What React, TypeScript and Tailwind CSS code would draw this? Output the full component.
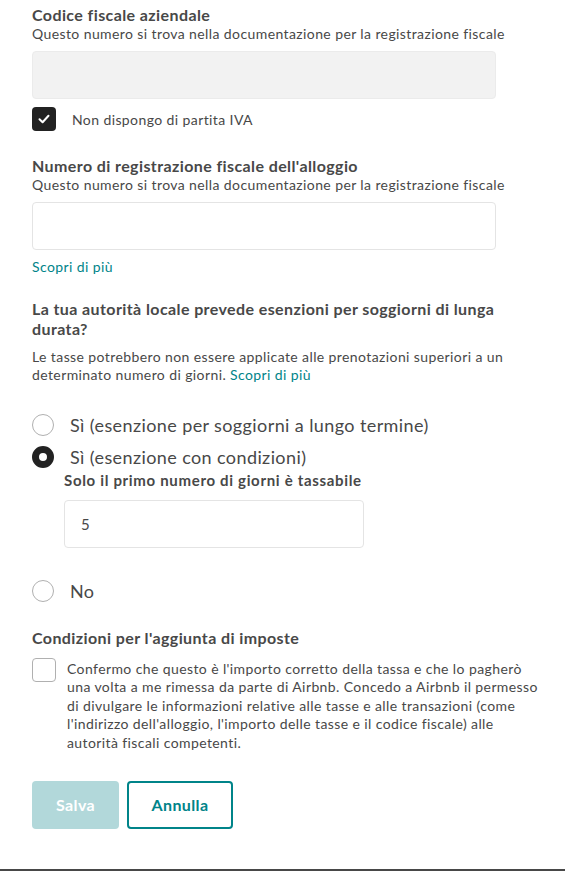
import React, { useState } from 'react'

const font = { fontFamily: 'Lato, "Open Sans", Arial, sans-serif' }

const Radio = ({ checked, label, onClick }: { checked: boolean; label: string; onClick: () => void }) => (
	<button type="button" onClick={onClick} className="flex items-center gap-4 text-left">
		{checked ? (
			<span className="w-[22px] h-[22px] rounded-full border-[7px] border-[#222222] bg-white shrink-0" />
		) : (
			<span className="w-[22px] h-[22px] rounded-full border border-[#b0b0b0] bg-white shrink-0" />
		)}
		<span className="text-[18px] leading-[24px] text-[#484848]">{label}</span>
	</button>
)

const Check = () => (
	<span className="w-6 h-6 rounded bg-[#222222] flex items-center justify-center shrink-0">
		<svg width="14" height="14" viewBox="0 0 14 14" fill="none">
			<path d="M2.5 7.2 5.6 10.2 11.5 3.8" stroke="white" strokeWidth="2" strokeLinecap="round" strokeLinejoin="round" />
		</svg>
	</span>
)

export default function App() {
	const [noVat, setNoVat] = useState(true)
	const [exemption, setExemption] = useState('conditions')
	const [days, setDays] = useState('5')
	const [confirmed, setConfirmed] = useState(false)

	return (
		<div className="w-[565px] h-[871px] bg-white flex flex-col tracking-[0.025em]" style={font}>
			<div className="flex flex-col pl-8 pr-5 pt-[5px]">
				{/* Codice fiscale */}
				<span className="text-[16px] leading-[20px] font-bold text-[#484848]">Codice fiscale aziendale</span>
				<span className="text-[14px] leading-[18px] text-[#484848]">
					Questo numero si trova nella documentazione per la registrazione fiscale
				</span>
				<div className="mt-[8px] h-[48px] w-[464px] rounded bg-[#f2f2f2] border border-[#ebebeb]" />

				<button type="button" onClick={() => setNoVat(v => !v)} className="mt-[8px] flex items-center gap-4 text-left">
					{noVat ? <Check /> : <span className="w-6 h-6 rounded border border-[#b0b0b0] shrink-0" />}
					<span className="text-[14px] text-[#484848]">Non dispongo di partita IVA</span>
				</button>

				{/* Numero registrazione */}
				<span className="mt-[25px] text-[16px] leading-[20px] font-bold text-[#484848]">
					Numero di registrazione fiscale dell'alloggio
				</span>
				<span className="text-[14px] leading-[18px] text-[#484848]">
					Questo numero si trova nella documentazione per la registrazione fiscale
				</span>
				<input className="mt-[8px] h-[48px] w-[464px] rounded border border-[#e4e4e4] px-3 outline-none" />
				<a className="mt-[8px] text-[14px] leading-[18px] text-[#008489] self-start">Scopri di più</a>

				{/* Esenzioni */}
				<span className="mt-[23px] w-[472px] text-[16px] leading-[20px] font-bold text-[#484848]">
					La tua autorità locale prevede esenzioni per soggiorni di lunga durata?
				</span>
				<p className="mt-[9px] w-[490px] text-[14px] leading-[18px] text-[#484848]">
					Le tasse potrebbero non essere applicate alle prenotazioni superiori a un determinato numero di giorni.{' '}
					<span className="text-[#008489]">Scopri di più</span>
				</p>

				<div className="mt-[29px] flex flex-col gap-2">
					<Radio
						checked={exemption === 'long'}
						label="Sì (esenzione per soggiorni a lungo termine)"
						onClick={() => setExemption('long')}
					/>
					<Radio
						checked={exemption === 'conditions'}
						label="Sì (esenzione con condizioni)"
						onClick={() => setExemption('conditions')}
					/>
				</div>
				{exemption === 'conditions' && (
					<div className="flex flex-col pl-8 mt-[2px]">
						<span className="text-[15px] leading-[18px] font-bold text-[#484848] tracking-[0.045em]">
							Solo il primo numero di giorni è tassabile
						</span>
						<input
							value={days}
							onChange={e => setDays(e.target.value)}
							className="mt-[11px] h-[48px] w-[300px] rounded border border-[#e4e4e4] px-4 text-[15px] text-[#484848] outline-none"
						/>
					</div>
				)}
				<div className="mt-[31px]">
					<Radio checked={exemption === 'no'} label="No" onClick={() => setExemption('no')} />
				</div>

				{/* Condizioni */}
				<span className="mt-[25px] text-[16px] leading-[20px] font-bold text-[#484848]">
					Condizioni per l'aggiunta di imposte
				</span>
				<button type="button" onClick={() => setConfirmed(c => !c)} className="mt-[10px] flex items-start gap-[11px] text-left">
					{confirmed ? <Check /> : <span className="w-6 h-6 rounded border border-[#b0b0b0] shrink-0" />}
					<span className="w-[475px] text-[14px] leading-[18.4px] text-[#484848] mt-[2px]">
						Confermo che questo è l'importo corretto della tassa e che lo pagherò una volta a me rimessa da parte di
						Airbnb. Concedo a Airbnb il permesso di divulgare le informazioni relative alle tasse e alle transazioni
						(come l'indirizzo dell'alloggio, l'importo delle tasse e il codice fiscale) alle autorità fiscali
						competenti.
					</span>
				</button>

				{/* Azioni */}
				<div className="mt-[29px] flex gap-2">
					<button
						type="button"
						disabled={!confirmed}
						className="h-12 w-[87px] rounded bg-[#b2d8da] text-white text-[16px] font-bold disabled:cursor-not-allowed"
					>
						Salva
					</button>
					<button
						type="button"
						className="h-12 w-[106px] rounded border-2 border-[#008489] bg-white text-[#008489] text-[16px] font-bold"
					>
						Annulla
					</button>
				</div>
			</div>
			<div className="mt-auto h-[2px] bg-[#484848]" />
		</div>
	)
}
